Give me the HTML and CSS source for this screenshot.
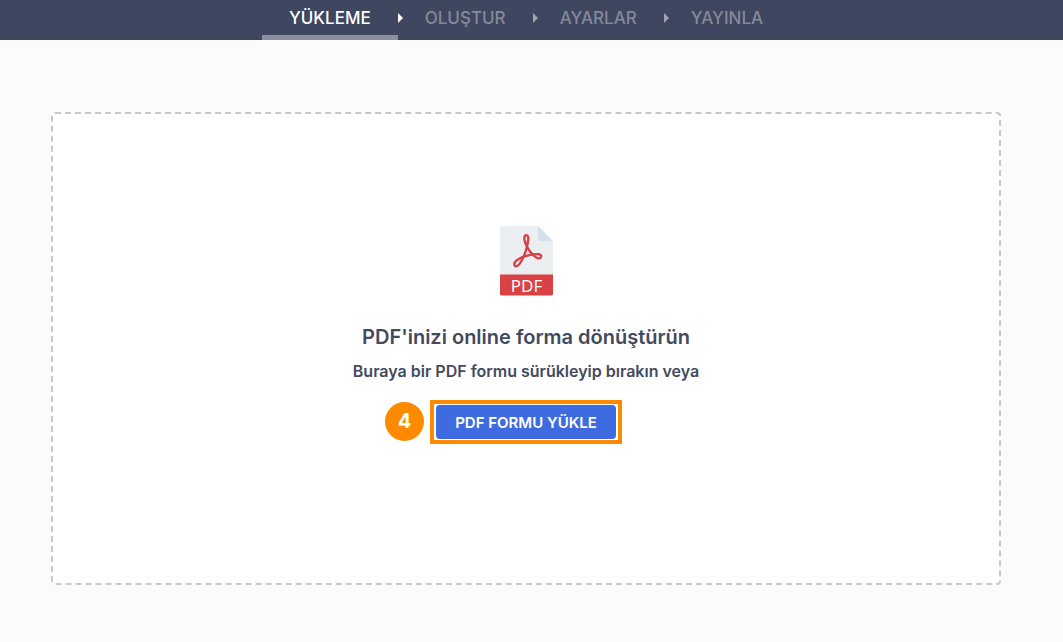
FILE: index.html
```html
<!DOCTYPE html>
<html lang="tr">
<head>
  <meta charset="UTF-8">
  <meta name="viewport" content="width=device-width, initial-scale=1.0">
  <title>PDF Formu Yükle</title>
  <link rel="stylesheet" href="styles.css">
</head>
<body>

  <nav class="steps">
    <a class="step active" href="#upload">YÜKLEME</a>
    <a class="step" href="#build">OLUŞTUR</a>
    <a class="step" href="#settings">AYARLAR</a>
    <a class="step" href="#publish">YAYINLA</a>
  </nav>

  <main class="page">
    <section class="dropzone">
      <svg class="pdf-icon" viewBox="0 0 53 70" width="53" height="70" aria-hidden="true">
        <path d="M2 0H38L53 15V49H0V2Q0 0 2 0Z" fill="#ebeff2"/>
        <path d="M38 0L53 15H40Q38 15 38 13Z" fill="#d5e0ea"/>
        <path d="M0 48.5H53V68Q53 69.5 51 69.5H2Q0 69.5 0 68Z" fill="#d94145"/>
        <path d="M26.3 9.3C23.8 9.3 23.9 13.2 25.4 17C27.5 22.5 32 28.5 36 31.4C38.6 33.2 41.2 32.2 41.2 30.2C41.2 27.8 36 27.6 30.5 28.8C25.5 29.8 20 31.8 16.8 34.2C13.6 36.6 13.7 40.3 16.2 40.3C18.6 40.3 21.4 35.6 23.6 30.6C26 25 28 17.6 28.3 13C28.5 10.6 27.8 9.3 26.3 9.3Z" fill="none" stroke="#d94145" stroke-width="2.4" stroke-linejoin="round"/>
        <text class="pdf-label" x="26.5" y="65.5" text-anchor="middle">PDF</text>
      </svg>
      <h1>PDF'inizi online forma dönüştürün</h1>
      <p>Buraya bir PDF formu sürükleyip bırakın veya</p>
      <div class="upload">
        <span class="badge">4</span>
        <button type="button">PDF FORMU YÜKLE</button>
      </div>
    </section>
  </main>

</body>
</html>
```
FILE: styles.css
```css
* {
  box-sizing: border-box;
}

body {
  margin: 0;
  min-height: 100vh;
  background-color: #fbfbfb;
  color: #434a60;
  font-family: Inter, 'Liberation Sans', sans-serif;
}

/* top steps */
.steps {
  display: flex;
  justify-content: center;
  height: 40px;
  padding-right: 11px;
  background-color: #3e4660;
}

.step {
  position: relative;
  padding: 0 27px;
  border-bottom: 5px solid transparent;
  color: #858a99;
  font-size: 17px;
  font-weight: 500;
  line-height: 36px;
  text-decoration: none;
}

.step.active {
  border-bottom-color: #8b90a0;
  color: #fff;
}

/* arrow between two steps */
.step:not(:last-child)::after {
  content: '';
  position: absolute;
  top: 13px;
  left: 100%;
  border: 5px solid transparent;
  border-left-color: #a0a4b0;
  border-right: 0;
}

.step.active::after {
  border-left-color: #fff;
}

.page {
  padding: 72px 62px 57px 51px;
}

.dropzone {
  display: flex;
  flex-direction: column;
  align-items: center;
  min-height: 473px;
  padding: 112px 20px;
  border: 2px dashed #c8c8c8;
  border-radius: 4px;
  background-color: #fff;
  text-align: center;
}

.pdf-label {
  fill: #fff;
  font-family: 'Open Sans', sans-serif;
  font-size: 17px;
  font-weight: 500;
}

h1 {
  margin: 27px 0 0;
  font-size: 20px;
  font-weight: 600;
  line-height: 28px;
}

p {
  margin: 10px 0 19px;
  font-size: 16px;
  font-weight: 600;
  line-height: 20px;
}

.upload {
  position: relative;
  padding: 1px 2px;
  border: 4px solid #ff8a00;
}

.upload button {
  display: block;
  height: 34px;
  padding: 0 19px;
  border: none;
  border-radius: 4px;
  background-color: #3f6be0;
  color: #fff;
  font-family: inherit;
  font-size: 15px;
  font-weight: 600;
  cursor: pointer;
}

/* step number next to the button */
.badge {
  position: absolute;
  top: -2px;
  right: 100%;
  width: 39px;
  margin-right: 10px;
  border-radius: 50%;
  background-color: #ff8a00;
  color: #fff;
  font-size: 20px;
  font-weight: 700;
  line-height: 39px;
}
```
